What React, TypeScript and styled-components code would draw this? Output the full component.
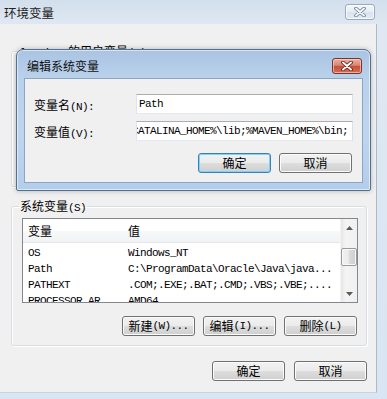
import React from "react";
import styled, { createGlobalStyle, css } from "styled-components";

const Global = createGlobalStyle`
  html, body { margin: 0; padding: 0; overflow: hidden; }
  body {
    font-family: "Noto Sans CJK SC", "Liberation Sans", sans-serif;
    font-size: 12px;
    color: #000;
  }
  * { box-sizing: border-box; }
`;

const Mono = styled.span`
  font-family: "Liberation Mono", "DejaVu Sans Mono", monospace;
  font-size: 11px;
  letter-spacing: -0.6px;
`;

const Window = styled.div`
  position: relative;
  width: 387px;
  height: 399px;
  display: flex;
  flex-direction: column;
  background: linear-gradient(180deg, #d3dfed 0px, #dfe8f2 24px, #d9e5f2 100%);
`;

const TitleBar = styled.div`
  height: 24px;
  flex: none;
  display: flex;
  align-items: center;
  justify-content: space-between;
  padding: 0 12px 0 4px;
  font-size: 12.5px;
  color: #222;
`;

const CloseBtn = styled.div<{ $active?: boolean }>`
  width: 30px;
  height: 16px;
  border-radius: 3px;
  display: flex;
  align-items: center;
  justify-content: center;
  ${(p) =>
    p.$active
      ? css`
          border: 1px solid #7a3326;
          background: linear-gradient(180deg, #eab0a3 0%, #d98673 45%, #c7503a 52%, #d0705c 100%);
          box-shadow: inset 0 0 0 1px rgba(255, 220, 210, 0.6);
        `
      : css`
          border: 1px solid #9aaabd;
          background: linear-gradient(180deg, #f4f7fb 0%, #e6edf5 50%, #dbe4ee 52%, #e3eaf2 100%);
          box-shadow: inset 0 0 0 1px rgba(255, 255, 255, 0.7);
        `}
`;

const Client = styled.div`
  flex: 1;
  margin: 0 10px 6px 0;
  background: #f0f0f0;
  border-right: 1px solid #a9bacd;
  border-bottom: 1px solid #c6d3e2;
  display: flex;
  flex-direction: column;
  padding: 0 9px 0 11px;
`;

const Group = styled.fieldset<{ $top: number; $height: number }>`
  margin: ${(p) => p.$top}px 0 0 0;
  height: ${(p) => p.$height}px;
  padding: 4px 8px 9px 10px;
  border: 1px solid #d5dfe5;
  border-radius: 3px;
  box-shadow: 1px 1px 0 #fff, inset 1px 1px 0 #fff;
  min-width: 0;
  flex: none;
  display: flex;
  flex-direction: column;
`;

const Legend = styled.legend`
  padding: 0 1px;
  margin-left: -3px;
  line-height: 16px;
  height: 16px;
  font-size: 12px;
`;

const ListBox = styled.div`
  height: 85px;
  border: 1px solid #828790;
  background: #fff;
  display: grid;
  grid-template-columns: 1fr 17px;
  overflow: hidden;
`;

const ListMain = styled.div`
  display: flex;
  flex-direction: column;
  overflow: hidden;
`;

const HeaderRow = styled.div`
  height: 24px;
  flex: none;
  display: grid;
  grid-template-columns: 100px 1fr;
  align-items: center;
  background: linear-gradient(180deg, #ffffff 0%, #ffffff 50%, #f7f8fa 51%, #f2f3f5 100%);
  border-bottom: 1px solid #e3e6eb;
  font-size: 12px;
`;

const Cell = styled.div`
  padding-left: 5px;
  white-space: nowrap;
  overflow: hidden;
`;

const Rows = styled.div`
  padding-top: 1px;
`;

const Row = styled.div`
  height: 16px;
  display: grid;
  grid-template-columns: 100px 1fr;
  align-items: center;
  line-height: 16px;
`;

const ScrollBar = styled.div`
  display: flex;
  flex-direction: column;
  background: linear-gradient(90deg, #e6e6e6 0%, #f4f4f4 30%, #f0f0f0 100%);
  border-left: 1px solid #f4f4f4;
`;

const ScrollArrow = styled.div`
  height: 17px;
  flex: none;
  display: flex;
  align-items: center;
  justify-content: center;
`;

const ScrollTrack = styled.div`
  flex: 1;
  display: flex;
  flex-direction: column;
  align-items: center;
`;

const Thumb = styled.div`
  width: 16px;
  height: 18px;
  border: 1px solid #9a9a9a;
  border-radius: 2px;
  background: linear-gradient(90deg, #f2f2f2 0%, #ebebeb 45%, #d9d9d9 55%, #cfcfcf 100%);
  box-shadow: inset 0 0 0 1px #f8f8f8;
`;

const ButtonRow = styled.div<{ $top: number; $gap: number; $right?: number }>`
  display: flex;
  justify-content: flex-end;
  gap: ${(p) => p.$gap}px;
  margin-top: ${(p) => p.$top}px;
  padding-right: ${(p) => p.$right ?? 0}px;
  flex: none;
`;

const Button = styled.div<{ $default?: boolean }>`
  width: 73px;
  height: 20px;
  border: 1px solid ${(p) => (p.$default ? "#3c7fb1" : "#707070")};
  border-radius: 3px;
  display: flex;
  align-items: center;
  justify-content: center;
  font-size: 12px;
  line-height: 1;
  background: linear-gradient(180deg, #f2f2f2 0%, #ebebeb 48%, #dddddd 52%, #cfcfcf 100%);
  box-shadow: inset 0 0 0 1px ${(p) => (p.$default ? "#7cd4f5" : "#fcfcfc")};
`;

const Footer = styled(ButtonRow)``;

const Dialog = styled.div`
  position: absolute;
  left: 16px;
  top: 49px;
  width: 355px;
  height: 142px;
  display: flex;
  flex-direction: column;
  border: 1px solid #52708f;
  border-radius: 7px 7px 2px 2px;
  background: linear-gradient(180deg, #a9c3e2 0%, #bad1eb 20%, #bfd5ee 60%, #b4cdea 100%);
  box-shadow: inset 0 0 0 1px rgba(255, 255, 255, 0.55), 0 0 5px rgba(0, 0, 0, 0.25);
`;

const DialogTitle = styled.div`
  height: 28px;
  flex: none;
  display: flex;
  align-items: center;
  justify-content: space-between;
  padding: 3px 8px 0 10px;
  font-size: 12px;
  color: #111;
`;

const DialogClient = styled.div`
  flex: 1;
  margin: 0 7px 7px 7px;
  border: 1px solid #8ba5c4;
  background: #f0f0f0;
  padding: 15px 9px 9px 9px;
  display: flex;
  flex-direction: column;
`;

const FieldGrid = styled.div`
  display: grid;
  grid-template-columns: 102px 1fr;
  row-gap: 7px;
  align-items: center;
`;

const Label = styled.div`
  font-size: 12px;
  white-space: nowrap;
`;

const TextBox = styled.div<{ $scrolled?: boolean }>`
  height: 20px;
  border: 1px solid #abadb3;
  border-left-color: #e2e3ea;
  border-right-color: #dbdfe6;
  border-bottom-color: #e3e9ef;
  background: #fff;
  display: flex;
  align-items: center;
  overflow: hidden;
  white-space: nowrap;
  padding: 0 ${(p) => (p.$scrolled ? 4 : 2)}px 0 2px;
  justify-content: ${(p) => (p.$scrolled ? "flex-end" : "flex-start")};
`;

const XIcon = ({ active }: { active?: boolean }) => (
  <svg width="14" height="10" viewBox="0 0 14 10">
    <path
      d="M3 1.5 L11 8.5 M11 1.5 L3 8.5"
      stroke={active ? "#5a1a10" : "#6b7b8f"}
      strokeWidth="3.6"
      strokeLinecap="round"
      fill="none"
    />
    <path
      d="M3 1.5 L11 8.5 M11 1.5 L3 8.5"
      stroke={active ? "#ffffff" : "#f4f6f9"}
      strokeWidth="2"
      strokeLinecap="round"
      fill="none"
    />
  </svg>
);

const Arrow = ({ down }: { down?: boolean }) => (
  <svg width="7" height="4" viewBox="0 0 7 4">
    <path d={down ? "M0 0 L7 0 L3.5 4 Z" : "M0 4 L7 4 L3.5 0 Z"} fill="#5a5a5a" />
  </svg>
);

const rows = [
  ["OS", "Windows_NT"],
  ["Path", "C:\\ProgramData\\Oracle\\Java\\java..."],
  ["PATHEXT", ".COM;.EXE;.BAT;.CMD;.VBS;.VBE;...."],
  ["PROCESSOR_AR", "AMD64"],
];

export default function App() {
  return (
    <>
      <Global />
      <Window>
        <TitleBar>
          <span>环境变量</span>
          <CloseBtn>
            <XIcon />
          </CloseBtn>
        </TitleBar>
        <Client>
          <Group $top={19} $height={144}>
            <Legend>
              <Mono>lu_xiao </Mono>的用户变量<Mono>(U)</Mono>
            </Legend>
          </Group>
          <Group $top={11} $height={148}>
            <Legend>
              系统变量<Mono>(S)</Mono>
            </Legend>
            <ListBox>
              <ListMain>
                <HeaderRow>
                  <Cell>变量</Cell>
                  <Cell>值</Cell>
                </HeaderRow>
                <Rows>
                  {rows.map(([k, v]) => (
                    <Row key={k}>
                      <Cell>
                        <Mono>{k}</Mono>
                      </Cell>
                      <Cell>
                        <Mono>{v}</Mono>
                      </Cell>
                    </Row>
                  ))}
                </Rows>
              </ListMain>
              <ScrollBar>
                <ScrollArrow>
                  <Arrow />
                </ScrollArrow>
                <ScrollTrack>
                  <Thumb style={{ marginTop: 12 }} />
                </ScrollTrack>
                <ScrollArrow>
                  <Arrow down />
                </ScrollArrow>
              </ScrollBar>
            </ListBox>
            <ButtonRow $top={13} $gap={8} $right={1}>
              <Button>
                新建<Mono>(W)...</Mono>
              </Button>
              <Button>
                编辑<Mono>(I)...</Mono>
              </Button>
              <Button>
                删除<Mono>(L)</Mono>
              </Button>
            </ButtonRow>
          </Group>
          <Footer $top={15} $gap={9}>
            <Button>确定</Button>
            <Button>取消</Button>
          </Footer>
        </Client>

        <Dialog>
          <DialogTitle>
            <span>编辑系统变量</span>
            <CloseBtn $active>
              <XIcon active />
            </CloseBtn>
          </DialogTitle>
          <DialogClient>
            <FieldGrid>
              <Label>
                变量名<Mono>(N):</Mono>
              </Label>
              <TextBox>
                <Mono>Path</Mono>
              </TextBox>
              <Label>
                变量值<Mono>(V):</Mono>
              </Label>
              <TextBox $scrolled>
                <Mono>%CATALINA_HOME%\lib;%MAVEN_HOME%\bin;</Mono>
              </TextBox>
            </FieldGrid>
            <ButtonRow $top={12} $gap={8} $right={1}>
              <Button $default>确定</Button>
              <Button>取消</Button>
            </ButtonRow>
          </DialogClient>
        </Dialog>
      </Window>
    </>
  );
}
